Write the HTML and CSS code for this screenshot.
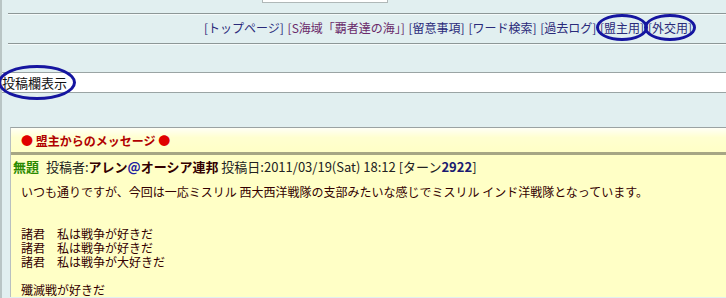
FILE: index.html
```html
<!DOCTYPE html>
<html lang="ja">
<head>
    <meta charset="UTF-8">
    <title>盟主からのメッセージ</title>
    <link rel="stylesheet" href="styles.css">
</head>
<body>
    <div class="page">
        <div class="top-input"></div>

        <div class="menu-bar">
            <a href="#top">[トップページ]</a>
            <a href="#sea" class="visited">[S海域「覇者達の海」]</a>
            <a href="#notes">[留意事項]</a>
            <a href="#search">[ワード検索]</a>
            <a href="#log">[過去ログ]</a>
            <a href="#leader" class="mark">[盟主用]</a>
            <a href="#diplo" class="mark">[外交用]</a>
        </div>

        <div class="post-toggle">
            <span class="mark">投稿欄表示</span>
        </div>

        <div class="message-box">
            <div class="message-head">
                <span class="dot">●</span> 盟主からのメッセージ <span class="dot">●</span>
            </div>
            <div class="message-title">
                <span class="subject">無題</span>
                投稿者:<b class="author">アレン<span class="at">@</span>オーシア連邦</b>
                投稿日:2011/03/19(Sat) 18:12 [ターン<b class="turn">2922</b>]
            </div>
            <div class="message-body">
                <p>いつも通りですが、今回は一応ミスリル 西大西洋戦隊の支部みたいな感じでミスリル インド洋戦隊となっています。</p>
                <p class="verse">諸君　私は戦争が好きだ<br>諸君　私は戦争が好きだ<br>諸君　私は戦争が大好きだ</p>
                <p class="verse">殲滅戦が好きだ</p>
            </div>
        </div>
    </div>
</body>
</html>
```

FILE: styles.css
```css
* {
    margin: 0;
    padding: 0;
    box-sizing: border-box;
}

body {
    background-color: #e1eff0;
    font-family: "Noto Sans CJK JP", "Noto Sans", sans-serif;
    font-size: 12px;
    color: #330000;
    overflow: hidden;
}

.page {
    border-left: 2px solid #b9c5c5;
    min-height: 298px;
}

.top-input {
    margin-left: 260px;
    width: 126px;
    height: 3px;
    background: #ffffff;
    border: 1px solid #b0b8b8;
    border-top: none;
}

.menu-bar {
    margin: 10px 0 0 6px;
    border-top: 1px solid #8d9797;
    border-bottom: 1px solid #8d9797;
    height: 31px;
    line-height: 28px;
    text-align: right;
    padding-right: 34px;
    box-shadow: 0 1px 0 #f4fafa inset, 0 1px 0 #f4fafa;
}

.menu-bar a {
    color: #2a2a7a;
    text-decoration: none;
    margin-left: 1px;
}

.menu-bar a.visited {
    color: #6a2a6a;
}

.mark {
    position: relative;
}

.mark::after {
    content: "";
    position: absolute;
    left: -4px;
    right: -4px;
    top: -5px;
    bottom: -5px;
    border: 3px solid #1515a0;
    border-radius: 50%;
}

.post-toggle {
    margin-top: 28px;
    background: #ffffff;
    border-top: 1px solid #9aa4a4;
    border-bottom: 1px solid #9aa4a4;
    height: 21px;
    line-height: 19px;
    font-size: 13px;
    color: #111111;
}

.post-toggle .mark::after {
    left: -4px;
    right: -9px;
    top: -8px;
    bottom: -8px;
}

.message-box {
    margin: 34px 0 0 8px;
    background: #ffffc6;
    border-top: 1px solid #9aa2a2;
    border-left: 1px solid #b8c0c0;
}

.message-head {
    height: 27px;
    line-height: 26px;
    padding-left: 10px;
    color: #b00000;
    font-weight: bold;
    font-size: 12px;
    background: linear-gradient(#fffff6, #ffffd0 40%, #ffffc6);
    border-bottom: 3px solid #a6a684;
}

.dot {
    color: #e00000;
}

.message-title {
    padding: 2px 0 0 2px;
    height: 21px;
    font-size: 13px;
    color: #222222;
}

.subject {
    color: #2a8a00;
    font-weight: bold;
    margin-right: 4px;
}

.author {
    color: #330000;
}

.at {
    color: #2020a0;
}

.turn {
    color: #1a1a70;
}

.message-body {
    padding: 8px 0 0 10px;
    line-height: 15px;
    color: #330000;
}

.verse {
    margin-top: 28px;
    line-height: 14px;
}

.verse + .verse {
    margin-top: 14px;
}
```
